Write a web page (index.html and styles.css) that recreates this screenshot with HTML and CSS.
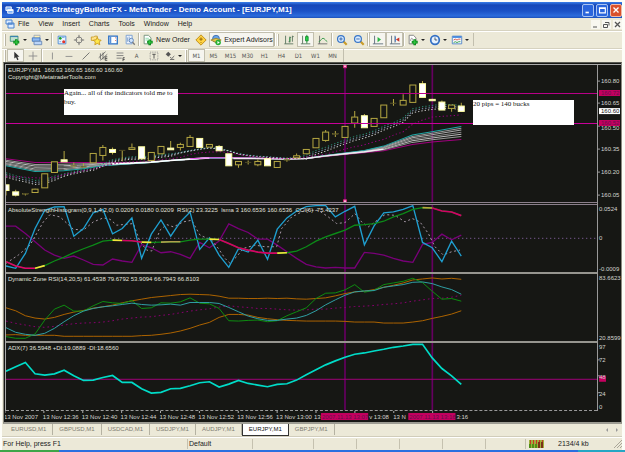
FILE: index.html
```html
<!DOCTYPE html>
<html lang="en">
<head>
<meta charset="utf-8">
<title>7040923: StrategyBuilderFX - MetaTrader</title>
<link rel="stylesheet" href="styles.css">
</head>
<body>
<div class="app">
  <header class="titlebar">
    <svg class="app-icon" viewBox="0 0 10 10"><path d="M1 1h6v4H1z M3 4h6v4H3z" fill="#7fb2f5" stroke="#fff"/><path d="M3 5h6" stroke="#fff"/></svg>
    <h1>7040923: StrategyBuilderFX - MetaTrader - Demo Account - [EURJPY,M1]</h1>
    <div class="window-buttons">
      <button aria-label="Minimize"><svg viewBox="0 0 12 12"><path d="M3 9h4" stroke="#fff" stroke-width="2"/></svg></button>
      <button aria-label="Maximize"><svg viewBox="0 0 12 12"><path d="M3 3.5h7v6H3z M3 4h7" fill="none" stroke="#fff" stroke-width="1.4"/></svg></button>
      <button class="close" aria-label="Close"><svg viewBox="0 0 12 12"><path d="M3 3l6 6M9 3l-6 6" stroke="#fff" stroke-width="1.6"/></svg></button>
    </div>
  </header>

  <nav class="menubar">
    <svg class="menu-icon" viewBox="0 0 10 10"><path d="M1 1h6v4H1z M3 4h6v5H3z" fill="#dcebff" stroke="#4b84cf"/><path d="M3 5h6" stroke="#4b84cf"/></svg>
    <button>File</button><button>View</button><button>Insert</button><button>Charts</button><button>Tools</button><button>Window</button><button>Help</button>
    <div class="doc-buttons">
      <button aria-label="Minimize chart"><svg viewBox="0 0 9 9"><path d="M2 7h4" stroke="#555"/></svg></button>
      <button aria-label="Restore chart"><svg viewBox="0 0 9 9"><path d="M3 2.5h4v3M1.5 4.5h4v3h-4z" fill="none" stroke="#555"/></svg></button>
      <button aria-label="Close chart"><svg viewBox="0 0 9 9"><path d="M2 2l5 5M7 2L2 7" stroke="#555" stroke-width="1.3"/></svg></button>
    </div>
  </nav>

  <div class="toolbar">
    <i class="grip"></i>
    <button class="drop" aria-label="New chart"><svg viewBox="0 0 14 14"><path d="M1.500 2.500h9v6h-9z" fill="#bfe0d0" stroke="#3c8d76"/><path d="M1.500 3h9" stroke="#2c78b4"/><path d="M8.500 6v7M5 9.500h7" stroke="#0d8a1c" stroke-width="3"/><path d="M8.500 7v5M6 9.500h5" stroke="#35d145"/></svg></button>
    <button class="drop" aria-label="Profiles"><svg viewBox="0 0 14 14"><path d="M3.500 1.500h7v6h-7z" fill="#fff1b6" stroke="#98a6bc"/><path d="M1.500 4.500h9v4h-9z" fill="#8fbaf2" stroke="#3a72bf"/><path d="M3.500 8.500h9v4h-9z" fill="#bcd5f8" stroke="#6585b3"/></svg></button>
    <i class="sep"></i>
    <button aria-label="Market watch"><svg viewBox="0 0 14 14"><path d="M2.500 2.500h9v9h-9z" fill="#eef5ff" stroke="#3f83d4"/><circle cx="5" cy="5" r="1.600" fill="#15a02d"/><circle cx="9" cy="9" r="1.800" fill="#e2352b"/><path d="M7 4h3M4 9h2" stroke="#6aa3df"/></svg></button>
    <button aria-label="Data window"><svg viewBox="0 0 14 14"><circle cx="7" cy="7" r="3.500" fill="none" stroke="#777"/><path d="M7 1v4M7 9v4M1 7h4M9 7h4" stroke="#666"/></svg></button>
    <button aria-label="Navigator"><svg viewBox="0 0 14 14"><path d="M1.500 3.500h3l1-1h3v5h-7z" fill="#ffe38a" stroke="#c79a27"/><path d="M8.500 4l1.500 2.800 3 .4-2.200 2.200.6 3.100-2.900-1.500L5.600 12.500l.6-3.100L4 7.200l3-.4z" fill="#ffe84b" stroke="#c79718"/></svg></button>
    <button aria-label="Terminal"><svg viewBox="0 0 14 14"><path d="M2 2.500h10v9H2z" fill="#fff" stroke="#2d71c5" stroke-width="1.500"/><path d="M4 3v8" stroke="#5791d8" stroke-width="2"/><path d="M10 4v1M10 7v1" stroke="#d54a3a"/></svg></button>
    <button aria-label="Strategy tester"><svg viewBox="0 0 14 14"><path d="M2.500 1.500h7v10h-7z" fill="#edf4ff" stroke="#7199ce"/><path d="M4 4v5M6 3v6" stroke="#80a0c8"/><circle cx="8.500" cy="7.500" r="2.500" fill="#cfe3fa" stroke="#5880b8"/><path d="M10 9.500l2.500 3" stroke="#777" stroke-width="1.500"/></svg></button>
    <i class="sep"></i>
    <button class="labelled order"><svg viewBox="0 0 14 14"><path d="M2.500 1.500h5l3 3v7h-8z" fill="#fff" stroke="#6b8b74"/><path d="M4 5h4M4 7h3" stroke="#8da"/><path d="M9 6.500v6.500M6 9.500h6.500" stroke="#0b8a1b" stroke-width="3"/><path d="M9 7v5M7 9.500h5" stroke="#3bd24a"/></svg>New Order</button>
    <button aria-label="MetaEditor"><svg viewBox="0 0 14 14"><path d="M7 1l6 6-6 6-6-6z" fill="#ffd343" stroke="#b98510"/><path d="M7 4v4M7 9.500v1M5 6h4" stroke="#8a5d00"/></svg></button>
    <button class="labelled experts pressed"><svg viewBox="0 0 14 14"><circle cx="7" cy="5.500" r="4" fill="#67a2e5" stroke="#3a6cae"/><path d="M1 7l6-2 6 2-6 3z" fill="#e3c44d" stroke="#9b8527"/><circle cx="9.500" cy="10" r="3.200" fill="#25b034"/><path d="M8.700 8.300l2.700 1.700-2.700 1.700z" fill="#fff"/></svg>Expert Advisors</button>
    <i class="sep"></i><i class="grip"></i>
    <button aria-label="Bar chart"><svg viewBox="0 0 14 14"><path d="M3 2v9.500h9M1.500 11.500H3M8 3v7M11 2v7M6.500 9H8M8 4h1.500M11 3h1.500" fill="none" stroke="#55705a"/><path d="M8 4v5" stroke="#1d9437"/></svg></button>
    <button class="pressed" aria-label="Candlesticks"><svg viewBox="0 0 14 14"><path d="M3 2v9.500h9M1 11.500h2" fill="none" stroke="#55705a"/><path d="M8 1v10" stroke="#14802a"/><path d="M6.500 3h3v5h-3z" fill="#27d848" stroke="#128a2c"/></svg></button>
    <button aria-label="Line chart"><svg viewBox="0 0 14 14"><path d="M3 2v9.500h9M1 11.500h2" fill="none" stroke="#666"/><path d="M2 9c3-1 3-4 5-4s3 3 5 4" fill="none" stroke="#2c9440"/></svg></button>
    <i class="sep"></i>
    <button aria-label="Zoom in"><svg viewBox="0 0 14 14"><path d="M8.500 8.500l4 4" stroke="#c99b29" stroke-width="2.500"/><circle cx="5.800" cy="5.800" r="4" fill="#d9ebff" stroke="#3976c7" stroke-width="1.400"/><path d="M5.800 3.800v4M3.800 5.800h4" stroke="#285ca6"/></svg></button>
    <button aria-label="Zoom out"><svg viewBox="0 0 14 14"><path d="M8.500 8.500l4 4" stroke="#c99b29" stroke-width="2.500"/><circle cx="5.800" cy="5.800" r="4" fill="#d9ebff" stroke="#3976c7" stroke-width="1.400"/><path d="M3.800 5.800h4" stroke="#285ca6"/></svg></button>
    <i class="sep"></i>
    <button class="pressed" aria-label="Auto scroll"><svg viewBox="0 0 14 14"><path d="M3 2v9.500h10M1 11.500h2" fill="none" stroke="#567"/><path d="M6.500 3.500v6l4-3z" fill="#29b543"/></svg></button>
    <button class="pressed" aria-label="Chart shift"><svg viewBox="0 0 14 14"><path d="M3 2v9.500h10M1 11.500h2M7 2v8" fill="none" stroke="#567"/><path d="M12 4v5L8 6.500z" fill="#c9372c"/><path d="M7.500 3v6" stroke="#3c78c8"/></svg></button>
    <i class="sep"></i>
    <button class="drop" aria-label="Indicators"><svg viewBox="0 0 14 14"><path d="M2.500 1.500h5l3 3v7h-8z" fill="#fff" stroke="#777"/><path d="M4 8c1-4 2-4 3-1" fill="none" stroke="#888"/><path d="M9 6v7M5.500 9.500h7" stroke="#0b8a1b" stroke-width="3"/><path d="M9 7v5M6.500 9.500h5" stroke="#3bd24a"/></svg></button>
    <button class="drop" aria-label="Periods"><svg viewBox="0 0 14 14"><circle cx="7" cy="7" r="5" fill="#e5f1ff" stroke="#326fc4" stroke-width="2"/><path d="M7 4v3h2.500" fill="none" stroke="#345"/></svg></button>
    <button class="drop" aria-label="Templates"><svg viewBox="0 0 14 14"><path d="M1.500 2.500h11v9h-11z" fill="#f4f8ff" stroke="#4a7fc4"/><path d="M2 3.500h10" stroke="#3f83dc" stroke-width="2"/><path d="M3 7l2-1 2 1 2-1 2 0" fill="none" stroke="#d54a3a"/><path d="M3 10l2-1 2 1 2-1 2 0" fill="none" stroke="#259a3a"/></svg></button>
    <i class="end"></i>
  </div>

  <div class="toolbar lines">
    <i class="grip"></i>
    <button class="pressed" aria-label="Cursor"><svg viewBox="0 0 14 14"><path d="M5 2v8l2-1.600 1.500 3.600 1.500-.8L8.500 8H11z" fill="#333"/></svg></button>
    <button aria-label="Crosshair"><svg viewBox="0 0 14 14"><path d="M7 2v10M2 7h10" stroke="#888"/></svg></button>
    <i class="sep"></i>
    <button aria-label="Vertical line"><svg viewBox="0 0 14 14"><path d="M7.500 3v8" stroke="#888"/></svg></button>
    <button aria-label="Horizontal line"><svg viewBox="0 0 14 14"><path d="M3 7.500h8" stroke="#888"/></svg></button>
    <button aria-label="Trendline"><svg viewBox="0 0 14 14"><path d="M3 11l8-8" stroke="#666"/></svg></button>
    <button aria-label="Channel"><svg viewBox="0 0 14 14"><path d="M2 9l8-7M4 12l8-7M4 4v7M7 3v8" stroke="#666"/><path d="M12 8H9.500v4H12M9.500 10H12" fill="none" stroke="#444"/></svg></button>
    <button aria-label="Fibonacci"><svg viewBox="0 0 14 14"><path d="M3 3.500h8M3 6.500h8M3 9.500h6" stroke="#777"/><path d="M12.500 9h-2v4M10.500 11h2" fill="none" stroke="#444"/></svg></button>
    <button aria-label="Text">A</button>
    <button aria-label="Text label"><svg viewBox="0 0 14 14"><path d="M2.500 2.500h9v9h-9z" fill="none" stroke="#888" stroke-dasharray="1 1"/><path d="M5 5h4M7 5v5" stroke="#444"/></svg></button>
    <button class="drop" aria-label="Arrows"><svg viewBox="0 0 14 14"><path d="M5 2l3 3-3 3-3-3z" fill="#555"/><path d="M7 8l2 2 3-3M7 11h5" fill="none" stroke="#555"/></svg></button>
    <i class="grip"></i>
    <button class="pressed">M1</button><button>M5</button><button>M15</button><button>M30</button><button>H1</button><button>H4</button><button>D1</button><button>W1</button><button>MN</button>
    <i class="end"></i>
  </div>

  <main class="chart">
    <section class="panel price">
      <div class="plot"><svg id="price" viewBox="18 12 1773 411" preserveAspectRatio="none"></svg></div>
      <svg class="axis" viewBox="0 0 23 140">
        <path d="M0 16h2M0 38h2M0 61h2M0 84h2M0 107h2M0 130h2" stroke="#999"/>
        <text x="3" y="18">160.80</text><text x="3" y="40">160.65</text><text x="3" y="65">160.50</text><text x="3" y="86">160.35</text><text x="3" y="109">160.20</text><text x="3" y="132">160.05</text>
        <path d="M1 25h21v6H1zM1 55h21v6H1z" fill="#c4005f"/><path d="M1 43h21v6H1z" fill="#fff"/>
        <text class="tag" x="3" y="30">160.72</text><text class="now" x="3" y="48">160.60</text><text class="tag" x="3" y="60">160.52</text>
      </svg>
      <p class="caption">EURJPY,M1&nbsp; 160.63 160.65 160.60 160.60<br>Copyright@MetatraderTools.com</p>
      <p class="note first">Again... all of the indicators told me to buy.</p>
      <p class="note second">20 pips = 140 bucks</p>
    </section>
    <section class="panel strength">
      <div class="plot"><svg id="strength" viewBox="18 9 1773 201" preserveAspectRatio="none"></svg></div>
      <svg class="axis" viewBox="0 0 23 69"><text x="1" y="6">0.0524</text><text x="1" y="35">0</text><text x="1" y="66">-0.0009</text></svg>
      <p class="caption">AbsoluteStrengthHistogram(0,9,1,4,2,0) 0.0209 0.0180 0.0209&nbsp; RSI(2) 23.3225&nbsp; lsma 3 160.6536 160.6536&nbsp; CCI(6) -75.4237</p>
    </section>
    <section class="panel zone">
      <div class="plot"><svg id="zone" viewBox="18 216 1773 204" preserveAspectRatio="none"></svg></div>
      <svg class="axis" viewBox="0 0 23 70"><text x="1" y="6">83.6623</text><text x="1" y="66">20.8599</text></svg>
      <p class="caption">Dynamic Zone RSI(14,20,5) 61.4538 79.6792 53.9094 66.7943 66.8103</p>
    </section>
    <section class="panel adx">
      <div class="plot"><svg id="adx" viewBox="18 9 1773 201" preserveAspectRatio="none"></svg></div>
      <svg class="axis" viewBox="0 0 23 68"><path d="M0 17h2M0 33h2M0 50h2" stroke="#999"/><path d="M1 33h7v6H1z" fill="#c4005f"/><text x="1" y="6">97</text><text x="1" y="19">72</text><text x="1" y="36">48</text><text x="1" y="53">24</text><text x="1" y="66">0</text></svg>
      <p class="caption">ADX(7) 36.5948 +DI:19.0889 -DI:18.6560</p>
    </section>
    <svg class="times" viewBox="6 0 614 10" preserveAspectRatio="xMinYMin meet" id="times"></svg>
  </main>

  <nav class="tabs">
    <a href="#">EURUSD,M1</a><a href="#">GBPUSD,M1</a><a href="#">USDCAD,M1</a><a href="#">USDJPY,M1</a><a href="#">AUDJPY,M1</a><a href="#" class="active">EURJPY,M1</a><a href="#">GBPJPY,M1</a>
    <svg class="scroll" viewBox="0 0 14 6"><path d="M3 1v4L1 3zM11 1v4l2-2z" fill="#999"/></svg>
  </nav>

  <footer class="status">
    <span class="help">For Help, press F1</span><span class="profile">Default</span><span class="cell wide"></span><span class="cell"></span><span class="cell"></span><span class="cell"></span><span class="cell"></span><span class="cell narrow"></span>
    <span class="traffic"><svg viewBox="0 0 15 8"><path d="M0 0h15v8H0z" fill="#9fae3c"/><path d="M1.500 0v8M4.500 0v8M7.500 0v8M10.500 0v8M13.500 0v8" stroke="#c43a25"/><path d="M0 6h9" stroke="#4f8e18" stroke-width="4" stroke-dasharray="2 1"/><path d="M9 5h6" stroke="#7a3318" stroke-width="6" stroke-dasharray="2 1"/></svg>2134/4 kb</span>
    <svg class="resize" viewBox="0 0 8 8"><path d="M0 8l8-8M3 8l5-5M6 8l2-2" stroke="#aaa699"/></svg>
  </footer>
</div>
<div class="taskbar"></div>
<script src="chart.js"></script>
</body>
</html>
```
FILE: styles.css
```css
* { box-sizing: border-box; }
body {
  margin: 0;
  height: 100vh;
  display: flex;
  flex-direction: column;
  background: #fdfdf8;
  font: 7px/8px "Liberation Sans", sans-serif;
  color: #222;
}
svg { display: block; }
p, h1 { margin: 0; font-weight: normal; }
button { margin: 0; padding: 0; border: 0; background: none; font: inherit; color: inherit; }
.app {
  flex: 1;
  min-height: 0;
  display: flex;
  flex-direction: column;
  margin: 2px 3px 0 2px;
  background: #ece9d8;
}
.titlebar {
  display: flex;
  align-items: center;
  height: 16px;
  padding: 0 0 0 3px;
  background: linear-gradient(#3a80ea, #1748b8 3px, #1a51c6 9px, #2c6cdc 14px, #1b4fb8);
  color: #fff;
}
.app-icon { width: 9px; height: 9px; }
.titlebar h1 { flex: 1; margin-left: 2px; font: bold 8px/12px "Liberation Sans", sans-serif; white-space: nowrap; }
.window-buttons { display: flex; gap: 2px; }
.window-buttons button {
  width: 12px;
  height: 13px;
  border: 1px solid #a9c4f2;
  border-radius: 2px;
  background: #2b66dc;
}
.window-buttons .close { background: #d9512c; border-color: #f0b9a6; }
.menubar { display: flex; align-items: center; height: 12px; padding-left: 3px; }
.menu-icon { width: 10px; height: 10px; margin-right: 3px; }
.menubar > button { margin-right: 9px; }
.doc-buttons { display: flex; gap: 2px; margin-left: auto; }
.doc-buttons button { width: 9px; height: 9px; background: #f8f7f0; }
.toolbar {
  display: flex;
  align-items: center;
  height: 18px;
  padding-left: 1px;
  border-top: 1px solid #d6d2c0;
  box-shadow: inset 0 1px #fff;
}
.toolbar.lines { height: 14px; color: #555; font: 6px/8px "DejaVu Sans Condensed", sans-serif; }
.toolbar button {
  flex: none;
  width: 17px;
  height: 15px;
  display: flex;
  align-items: center;
  justify-content: center;
}
.toolbar svg { flex: none; width: 12px; height: 12px; }
.toolbar.lines button { height: 13px; }
.toolbar .pressed { background: #f6f5ef; border: 1px solid #c2bfae; }
.toolbar .drop { width: 22px; gap: 2px; }
.toolbar .drop::after { content: ""; border: 2px solid transparent; border-top-color: #222; border-bottom: 0; }
.toolbar .labelled { gap: 2px; white-space: nowrap; }
.toolbar .order { width: 52px; }
.toolbar .experts { width: 65px; }
.grip { flex: none; width: 2px; height: 12px; margin: 0 1px; border-left: 1px solid #fff; border-right: 1px solid #b9b5a3; }
.sep { flex: none; width: 2px; height: 13px; border-left: 1px solid #bbb8a6; border-right: 1px solid #fff; }
.end { width: 1px; height: 13px; margin-left: 2px; background: #c2bfae; }

.chart {
  flex: 1;
  min-height: 0;
  display: flex;
  flex-direction: column;
  margin-left: 1px;
  padding: 1px 0 0 1px;
  border: 1px solid #8b8a80;
  border-top-color: #55564f;
  border-bottom: 2px solid #9d9c93;
  background: #161714;
  color: #e0e0dc;
}
.panel { position: relative; display: flex; min-height: 0; border-left: 1px solid #aaa; }
.price { flex: 141; border-top: 1px solid #aaa; }
.strength { flex: 69; }
.zone { flex: 70; }
.adx { flex: 68; }
.plot { flex: 1; min-width: 0; border-bottom: 2px solid #96958f; }
.price .plot { border-bottom: 3px double #8b7f8b; }
.adx .plot { border-bottom: 1px dashed #999; }
.plot svg { width: 100%; height: 100%; }
.axis { flex: none; width: 24px; border-left: 1px solid #999; overflow: visible; }
.axis text, .times text { font: 6px "Liberation Sans", sans-serif; fill: #d4d4d0; }
.axis .tag, .times .tag { fill: #66104c; }
.axis .now { fill: #111; }
.caption { position: absolute; left: 2px; top: 2px; font: 6px/7px "Liberation Sans", sans-serif; white-space: nowrap; }
.note { position: absolute; background: #fff; color: #111; font: 7px/9px "Liberation Serif", serif; }
.first { left: 58px; top: 24px; width: 114px; height: 26px; }
.second { right: 47px; top: 35px; width: 101px; height: 25px; }
.times { height: 11px; width: 100%; flex: none; }

.tabs {
  display: flex;
  align-items: flex-start;
  height: 13px;
  padding-left: 3px;
  border-bottom: 1px solid #d1cdbb;
  font-size: 6px;
}
.tabs a { padding: 2px 6px; color: #7d7b70; text-decoration: none; border-right: 1px solid #b5b2a2; line-height: 7px; }
.tabs .active { background: #fff; color: #111; border: 1px solid #333; border-top: 0; }
.scroll { width: 14px; height: 6px; margin: 3px 3px 0 auto; }
.status { display: flex; align-items: center; height: 13px; padding-left: 1px; border-top: 1px solid #fff; }
.status > span { height: 10px; border-right: 1px solid #c5c1af; line-height: 10px; }
.help { width: 185px; }
.profile { width: 65px; padding-left: 1px; }
.cell { width: 43px; }
.wide { width: 61px; }
.narrow { width: 40px; }
.status .traffic { display: flex; align-items: center; gap: 14px; padding-left: 3px; border: 0; }
.traffic svg { width: 15px; height: 8px; }
.resize { width: 8px; height: 8px; margin-left: auto; }
.taskbar { height: 2px; background: linear-gradient(90deg, #3ea548 59px, #2a6fe0 59px calc(100% - 47px), #25a6c4 0); }
```
FILE: chart.js
```js
// Every series has one value per bar; x is derived from the bar number.
const STEP = 29.06, X0 = 18;
const NS = 'http://www.w3.org/2000/svg';
const barX = i => X0 + STEP * i;

function add(parent, tag, attrs, text) {
  const el = document.createElementNS(NS, tag);
  for (const k in attrs) el.setAttribute(k, attrs[k]);
  if (text) el.textContent = text;
  parent.appendChild(el);
  return el;
}
function line(svg, ys, stroke, width = 3, dash = '', start = 0) {
  add(svg, 'polyline', {
    points: ys.map((y, i) => barX(i + start) + ',' + y).join(' '),
    fill: 'none', stroke, 'stroke-width': width, 'stroke-dasharray': dash
  });
}
function curve(svg, pts, stroke, width = 3, dash = '') {
  add(svg, 'polyline', { points: pts, fill: 'none', stroke, 'stroke-width': width, 'stroke-dasharray': dash });
}
function level(svg, y, stroke, dash = '') {
  add(svg, 'path', { d: `M18 ${y}H1791`, stroke, 'stroke-width': 3, 'stroke-dasharray': dash, 'shape-rendering': 'crispEdges' });
}
function markers(svg) {
  for (const x of [1035, 1297]) {
    add(svg, 'path', { d: `M${x} 0V430`, stroke: '#650060', 'stroke-width': 5 });
  }
}

// Price: averages, then candles [high, top, bottom, low, filled]
const price = document.getElementById('price');
markers(price);
const ribbonX = [18, 105, 191, 250, 308, 395, 453, 511, 569, 628, 715, 802, 860, 919, 976, 1034, 1093, 1151, 1237, 1296, 1384];
const upper = [293, 304, 304, 304, 305, 305, 303, 298, 294, 290, 291, 292, 293, 292, 286, 280, 275, 269, 250, 243, 235];
const lower = [314, 331, 329, 323, 314, 308, 304, 298, 294, 290, 291, 292, 293, 292, 283, 276, 268, 255, 222, 212, 196];
[['#a1007e', 0], ['#999', .22], ['#bbb', .4], ['#888', .55], ['#aaa', .72], ['#999', .86], ['#21a6a4', 1]].forEach(([c, t]) =>
  curve(price, ribbonX.map((x, i) => x + ',' + (upper[i] + (lower[i] - upper[i]) * t)).join(' '), c));
curve(price, '337,308 395,306 453,303 511,298 569,294 628,290', '#fff', 5);
curve(price, '569,293 628,290 700,290 802,292 919,292', '#e84fe8', 3);
curve(price, '700,292 802,293 860,294 919,292 976,284 1034,278 1093,272 1151,264', '#f2e8f2', 4);
const fast = [335, 344, 350, 358, 355, 345, 338, 331, 325, 320, 308, 296, 290, 287, 287, 284, 281, 278, 274, 268, 263, 259, 262, 268, 277, 282, 285, 287, 289, 291, 289, 282, 268, 258, 247, 236, 226, 219, 209, 195, 185, 171, 143, 137, 133, 130, 130, 134];
[['#2a8a72', 0, 1], ['#8aa0c0', 6, .8], ['#ccc', 12, .5]].forEach(([c, off]) =>
  line(price, fast.map((y, i) => y + off * (i < 6 ? 1 : i < 18 ? .6 : i < 31 ? .15 : 1)), c, 3, '4 6'));
line(price, [347,347,348,350,351,348,340,335,329,323,315,309,303,302,300,298,295,293,289,280,275,273,272,274,280,285,288,290,291,292,291,288,283,279,271,264,257,251,242,235,222,212,189,177,168,166,164,161], '#95007d', 3, '4 7');
const candles = [
  [370,371,388,403,1],[386,392,402,406,1],[396,397,399,403,1],[383,384,394,394,0],[337,338,380,380,0],[302,302,334,334,0],[270,296,302,302,1],[304,313,315,320,1],
  [306,316,318,320,1],[277,277,305,305,0],[252,259,283,298,0],[259,265,274,280,1],[267,267,269,300,1],[247,260,265,265,0],[257,257,293,293,1],[274,274,298,298,0],
  [256,256,278,278,0],[240,261,266,266,1],[245,250,259,268,0],[222,229,256,256,0],[232,232,259,259,1],[250,250,258,258,0],[252,256,269,269,1],[278,278,314,314,1],
  [301,301,311,320,0],[298,303,305,310,1],[295,301,311,315,0],[293,293,314,314,1],[301,301,319,319,0],[290,295,297,302,1],[277,284,290,290,0],[265,265,278,278,0],
  [232,232,260,260,0],[207,213,238,242,0],[210,218,220,228,1],[196,196,229,229,0],[150,168,186,200,0],[159,164,200,200,1],[172,172,196,196,0],[132,132,170,170,0],
  [114,126,127,134,1],[100,118,132,132,0],[72,72,124,124,0],[60,68,109,109,1],[113,115,119,119,1],[118,123,147,147,1],[132,132,142,152,0],[125,135,151,151,1]
];
candles.forEach(([hi, top, bot, lo, filled], i) => {
  const x = barX(i), gold = '#b5a742';
  add(price, 'path', { d: `M${x} ${hi}V${top}M${x} ${bot}V${lo}`, stroke: gold, 'stroke-width': 3 });
  const thin = bot - top < 4;
  add(price, 'rect', { x: x - 9, y: top, width: 18, height: bot - top, fill: filled && !thin ? '#fff' : '#161714', stroke: filled && !thin ? '#ffffa0' : gold, 'stroke-width': thin ? 1 : 3 });
});
level(price, 97.5, '#b80088', '5 1');
level(price, 187.5, '#c8009a');
for (const y of [16, 420]) add(price, 'rect', { x: 1031, y: y - 4, width: 8, height: 8, fill: '#ffd9ec', stroke: '#e02080', 'stroke-width': 3 });

// Strength, RSI and CCI
const strength = document.getElementById('strength');
markers(strength);
level(strength, 109.5, '#75578e', '4 8');
line(strength, [73,73,95,120,145,160,170,163,175,188,190,172,178,182,128,138,153,150,158,170,122,138,118,66,80,92,112,112,130,150,170,188,196,199,197,199,199,152,155,160,170,178,182,128,122,97,114,100], '#780078', 4);
curve(strength, '18,185 55,160 90,130 130,60 150,38 180,45 220,82 250,85 280,60 310,48 330,52 350,70 400,65 420,120 440,145 455,148 480,85 500,68 520,75 550,60 575,55 600,100 635,115 655,140 675,170 690,185 710,165 730,140 765,130 795,135 830,135 845,80 875,45 915,25 955,25 985,45 1010,65 1035,62 1065,35 1085,60 1105,75 1125,60 1155,38 1185,40 1215,60 1237,50 1260,60 1285,95 1305,135 1330,160 1355,150 1380,145', '#a698a6', 3, '6 8');
line(strength, [193,200,155,80,25,15,14,103,80,33,22,96,80,48,170,97,54,103,60,30,143,108,160,197,141,151,115,173,82,48,27,14,11,11,45,28,13,129,72,33,30,22,11,122,138,180,118,163], '#1f9fd0', 4);
const trend = [180,193,200,200,192,178,166,153,141,130,118,115,116,117,121,122,121,120,120,115,112,112,113,125,138,145,151,154,154,153,148,135,118,105,95,85,70,68,65,58,45,35,22,17,18,27,30,41];
line(strength, trend, '#0c8a18', 4);
[[0,3,'#e3006c'],[3,4,'#f4e53c'],[11,12,'#f4e53c'],[12,14,'#d40065'],[14,15,'#f4e53c'],[16,18,'#b0a04c'],[21,22,'#f4e53c'],[22,28,'#d40065'],[28,29,'#f4e53c'],[43,44,'#b6a83c'],[44,47,'#d40065']]
  .forEach(([a, b, c]) => line(strength, trend.slice(a, b + 1), c, 5, '', a));

// Dynamic zone
const zone = document.getElementById('zone');
markers(zone);
line(zone, [358,365,370,375,377,374,370,366,364,363,361,357,352,349,346,345,341,338,333,328,324,321,316,312,315,317,320,320,322,324,325,324,322,322,319,317,314,313,311,308,306,303,298,294,290,289,286,280], '#87006d', 3, '5 9');
line(zone, [318,327,342,349,352,347,338,331,326,319,315,310,303,297,292,287,284,281,278,277,278,279,283,289,289,290,290,289,290,289,291,292,290,288,282,275,270,268,263,256,250,243,234,231,228,231,229,232], '#ad6300', 3);
line(zone, [400,399,401,401,401,401,404,404,404,404,404,404,404,404,402,401,398,394,388,380,370,362,347,338,338,340,347,351,354,356,357,358,358,358,358,359,361,361,361,364,364,364,361,357,350,344,337,327], '#ad6300', 3);
line(zone, [405,410,410,397,355,322,310,328,328,312,299,303,305,296,320,318,303,304,300,288,304,306,320,357,358,356,355,360,357,342,330,318,290,274,273,264,248,271,265,248,243,238,229,242,268,292,290,298], '#0d8d10', 3);
line(zone, [378,392,398,401,395,380,360,342,328,320,315,312,308,304,308,310,309,307,310,302,302,302,305,317,330,343,351,356,356,352,349,341,327,309,294,280,270,267,266,256,252,248,241,240,245,255,263,277], '#2f9fa4', 3);

// ADX
const adx = document.getElementById('adx');
markers(adx);
level(adx, 118.5, '#a00078');
line(adx, [94,81,68,102,106,102,91,108,122,121,113,107,128,128,147,160,158,147,146,138,129,126,142,133,122,131,136,141,134,132,121,105,90,75,63,52,43,39,33,28,22,18,13,13,54,86,108,134], '#00dcc8', 5);

// Time scale; the two crosshair tags cover parts of the last labels
const times = document.getElementById('times');
const labels = ['2007', '12:36', '12:40', '12:44', '12:48', '12:52', '12:56', '13:00'];
for (let i = 0; i < 12; i++) {
  const x = 6 + i * 38.75;
  add(times, 'path', { d: `M${x} 0v2`, stroke: '#aaa' });
  if (labels[i]) add(times, 'text', { x: x - 1, y: 8 }, '13 Nov ' + labels[i]);
}
for (const [x, t] of [[314, '13'], [369, 'v 13:08'], [393, '13 N'], [456, '3:16']]) add(times, 'text', { x, y: 8 }, t);
for (const [x, t] of [[321, '2007.11.13 13:07'], [408, '2007.11.13 13:16']]) {
  add(times, 'rect', { x, y: 2, width: 47, height: 7, fill: '#c4005f' });
  add(times, 'text', { x: x + 1, y: 8, class: 'tag' }, t);
}
```
